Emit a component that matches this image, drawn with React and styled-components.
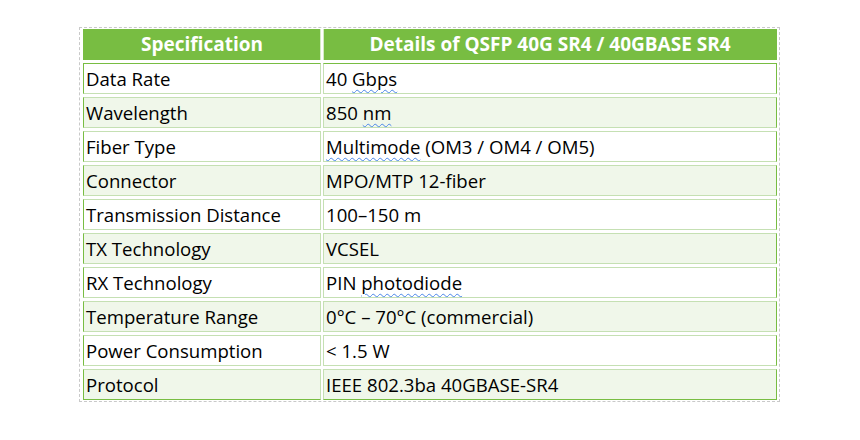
import React from 'react';
import styled, { createGlobalStyle } from 'styled-components';

const GlobalStyle = createGlobalStyle`
  html, body {
    margin: 0;
    padding: 0;
    background: #ffffff;
  }
  body {
    font-family: "Open Sans", "Noto Sans", "Liberation Sans", sans-serif;
    color: #000;
  }
`;

const Frame = styled.div`
  box-sizing: border-box;
  width: 701px;
  margin: 27px 0 0 79px;
  border: 1px dashed #c9c9c9;
  padding: 1px 0 1px 1px;
`;

const Table = styled.table`
  width: 698px;
  border-collapse: separate;
  border-spacing: 2px 3px;
  margin: -3px 0;
  table-layout: fixed;
`;

const HeadCell = styled.th`
  box-sizing: border-box;
  height: 31px;
  padding: 0 4px 1px;
  background: #78bd42;
  color: #ffffff;
  font-size: 19px;
  font-weight: 700;
  text-align: center;
  white-space: nowrap;
  border-left: 1px solid ${(p) => (p.$first ? '#78bd42' : '#d4ebc4')};
  border-right: 1px solid ${(p) => (p.$last ? '#78bd42' : '#d4ebc4')};
`;

const Cell = styled.td`
  box-sizing: border-box;
  height: 31px;
  padding: 0 2px 1px;
  font-size: 18.6px;
  white-space: nowrap;
  background: ${(p) => (p.$shaded ? '#f0f7ea' : '#ffffff')};
  border: 1px solid #c5e0b3;
  border-top-color: ${(p) => (p.$top ? '#78bd42' : '#c5e0b3')};
  border-bottom-color: ${(p) => (p.$bottom ? '#78bd42' : '#c5e0b3')};
  border-left-color: ${(p) => (p.$first ? '#78bd42' : '#c5e0b3')};
  border-right-color: ${(p) => (p.$last ? '#78bd42' : '#c5e0b3')};
`;

const Spell = styled.span`
  text-decoration: underline wavy #4a86e8;
  text-decoration-thickness: 1px;
  text-underline-offset: 3px;
`;

const rows = [
  ['Data Rate', <>40 <Spell>Gbps</Spell></>],
  ['Wavelength', <>850 <Spell>nm</Spell></>],
  ['Fiber Type', <><Spell>Multimode</Spell> (OM3 / OM4 / OM5)</>],
  ['Connector', 'MPO/MTP 12-fiber'],
  ['Transmission Distance', '100–150 m'],
  ['TX Technology', 'VCSEL'],
  ['RX Technology', <>PIN <Spell>photodiode</Spell></>],
  ['Temperature Range', '0°C – 70°C (commercial)'],
  ['Power Consumption', '< 1.5 W'],
  ['Protocol', 'IEEE 802.3ba 40GBASE-SR4'],
];

export default function App() {
  return (
    <>
      <GlobalStyle />
      <Frame>
        <Table>
          <colgroup>
            <col style={{ width: '238px' }} />
            <col />
          </colgroup>
          <thead>
            <tr>
              <HeadCell $first>Specification</HeadCell>
              <HeadCell $last>Details of QSFP 40G SR4 / 40GBASE SR4</HeadCell>
            </tr>
          </thead>
          <tbody>
            {rows.map(([label, value], i) => {
              const top = i === 0;
              const bottom = i === rows.length - 1;
              const shaded = i % 2 === 1;
              return (
                <tr key={label}>
                  <Cell $first $top={top} $bottom={bottom} $shaded={shaded}>{label}</Cell>
                  <Cell $last $top={top} $bottom={bottom} $shaded={shaded}>{value}</Cell>
                </tr>
              );
            })}
          </tbody>
        </Table>
      </Frame>
    </>
  );
}
